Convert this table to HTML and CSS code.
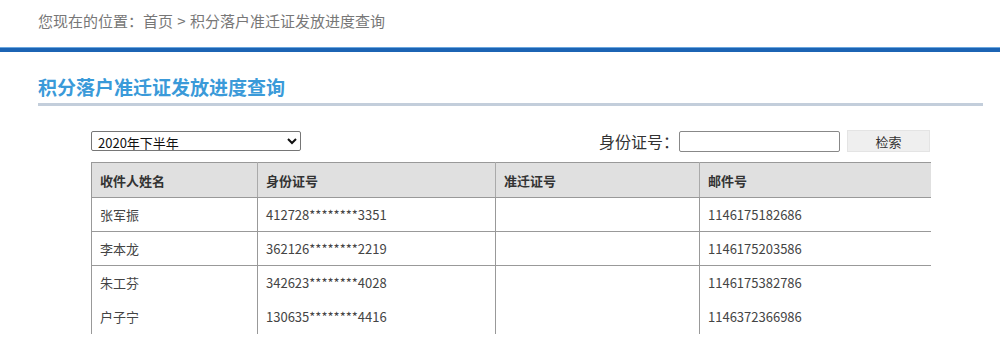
FILE: index.html
```html
<!DOCTYPE html>
<html lang="zh">
<head>
<meta charset="utf-8">
<title>积分落户准迁证发放进度查询</title>
<link rel="stylesheet" href="styles.css">
</head>
<body>
<div class="crumb">您现在的位置：首页 &gt; 积分落户准迁证发放进度查询</div>
<div class="bluebar"></div>
<div class="main">
  <h1 class="title">积分落户准迁证发放进度查询</h1>
  <div class="toolbar">
    <select class="period"><option>2020年下半年</option></select>
    <div class="search">
      <span class="label">身份证号：</span>
      <input class="idinput" type="text">
      <button class="btn">检索</button>
    </div>
  </div>
  <table class="grid">
    <colgroup><col class="c1"><col class="c2"><col class="c3"><col class="c4"></colgroup>
    <thead>
      <tr><th>收件人姓名</th><th>身份证号</th><th>准迁证号</th><th>邮件号</th></tr>
    </thead>
    <tbody>
      <tr><td>张军振</td><td>412728********3351</td><td></td><td>1146175182686</td></tr>
      <tr><td>李本龙</td><td>362126********2219</td><td></td><td>1146175203586</td></tr>
      <tr class="open"><td>朱工芬</td><td>342623********4028</td><td></td><td>1146175382786</td></tr>
      <tr class="cont"><td>户子宁</td><td>130635********4416</td><td></td><td>1146372366986</td></tr>
    </tbody>
  </table>
</div>
</body>
</html>
```
FILE: styles.css
```css
* { box-sizing: border-box; }
body {
  margin: 0;
  background: #fff;
  font-family: "Noto Sans CJK SC", "Liberation Sans", sans-serif;
  color: #333;
  overflow: hidden;
}
.crumb {
  height: 47px;
  padding: 10px 0 0 38px;
  font-size: 15px;
  line-height: 22px;
  color: #777;
  word-spacing: 1px;
}
.bluebar {
  height: 5px;
  border-top: 1px solid #6aa6de;
  background: #1c64b4;
}
.main {
  padding: 0 17px 0 38px;
}
.title {
  margin: 0;
  padding-top: 22px;
  height: 54px;
  font-size: 19px;
  line-height: 26px;
  font-weight: bold;
  color: #3a9ad9;
  border-bottom: 3px solid #c3cedb;
}
.toolbar {
  display: flex;
  align-items: center;
  justify-content: space-between;
  margin: 24px 53px 0 53px;
  height: 22px;
}
.period {
  width: 210px;
  height: 20px;
  font-family: "Noto Sans CJK SC", "Liberation Sans", sans-serif;
  font-size: 13px;
  border: 1px solid #767676;
  border-radius: 2px;
  background: #fff;
  color: #111;
  padding: 0 2px;
}
.search {
  display: flex;
  align-items: center;
}
.label {
  font-size: 16px;
  color: #333;
  margin-right: 0;
}
.idinput {
  width: 161px;
  height: 21px;
  border: 1px solid #888;
  border-radius: 2px;
  margin: 0 7px 0 0;
}
.btn {
  width: 83px;
  height: 22px;
  border: 1px solid #e4e4e4;
  background: #efefef;
  font-family: "Noto Sans CJK SC", sans-serif;
  font-size: 13px;
  color: #333;
  padding: 0;
}
.grid {
  margin: 10px 0 0 53px;
  width: 839px;
  border-collapse: collapse;
  table-layout: fixed;
  font-size: 13px;
}
.c1 { width: 166px; }
.c2 { width: 238px; }
.c3 { width: 204px; }
.c4 { width: 231px; }
.grid th {
  height: 35px;
  background: #e0e0e0;
  text-align: left;
  font-weight: bold;
  padding: 0 8px;
  border: 1px solid #999;
  border-right-color: #aaa;
  color: #333;
}
.grid td {
  height: 34px;
  padding: 0 8px;
  border: 1px solid #999;
  color: #444;
}
.grid th:last-child,
.grid td:last-child { border-right: none; }
.grid tr.open td { border-bottom: none; }
.grid tr.cont td { border-top: none; border-bottom: none; }
```
